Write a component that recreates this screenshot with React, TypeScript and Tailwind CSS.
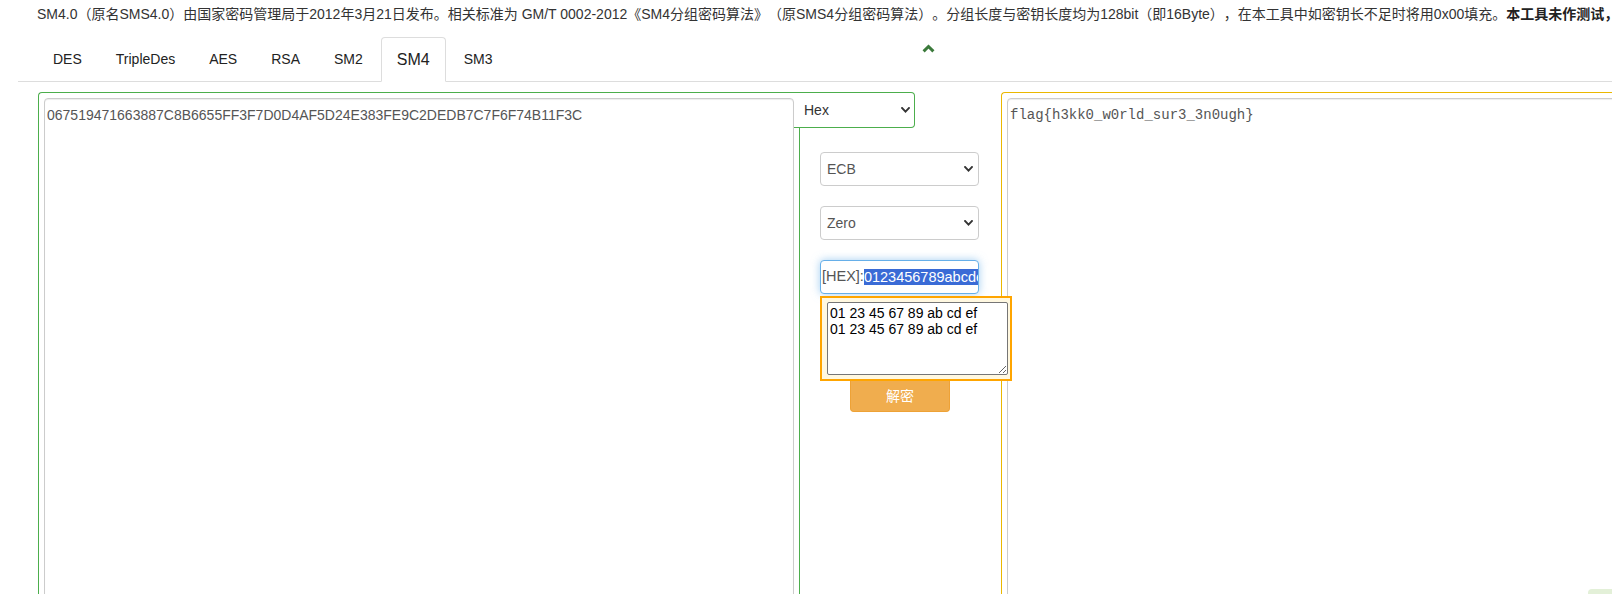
import React from "react";

function Caret({ className = "" }: { className?: string }) {
  return (
    <svg width="9" height="6" viewBox="0 0 9 6" className={className}>
      <path d="M1 1 L4.5 4.6 L8 1" fill="none" stroke="#333" strokeWidth="1.9" strokeLinecap="square" />
    </svg>
  );
}

function SelectBox({ label }: { label: string }) {
  return (
    <div className="h-[34px] w-[159px] border border-[#ccc] rounded-[4px] flex items-center justify-between pl-[6px] pr-[5px] text-[14px] text-[#555] bg-white">
      <span>{label}</span>
      <Caret />
    </div>
  );
}

const tabs = ["DES", "TripleDes", "AES", "RSA", "SM2", "SM4", "SM3"];

export default function App() {
  return (
    <div className="relative w-[1612px] h-[594px] overflow-hidden bg-white font-['Liberation_Sans','Noto_Sans_CJK_SC',sans-serif]">
      {/* description */}
      <div className="h-[37px] pl-[37px] pt-[4px] leading-[20px] text-[14px] text-[#333] whitespace-nowrap overflow-hidden [text-spacing-trim:space-all]">
        SM4.0（原名SMS4.0）由国家密码管理局于2012年3月21日发布。相关标准为 GM/T 0002-2012《SM4分组密码算法》（原SMS4分组密码算法）。分组长度与密钥长度均为128bit（即16Byte），在本工具中如密钥长不足时将用0x00填充。
        <span className="font-bold text-[#222]">本工具未作测试，</span>
      </div>

      {/* tabs */}
      <div className="ml-[18px] border-b border-[#ddd] flex pl-[19px] h-[45px]">
        {tabs.map((t) => {
          const active = t === "SM4";
          return (
            <div
              key={t}
              className={
                active
                  ? "h-[45px] -mb-px mr-[2px] px-[15px] flex items-center border border-[#ddd] border-b-white rounded-t-[4px] bg-white text-[16px] text-[#222]"
                  : "h-[45px] -mb-px mr-[2px] px-[15px] flex items-center border border-transparent text-[14px] text-[#222]"
              }
            >
              {t}
            </div>
          );
        })}
      </div>

      {/* collapse chevron */}
      <svg width="13" height="9" viewBox="0 0 13 9" className="absolute left-[922px] top-[44px]">
        <path d="M1.6 7.4 L6.5 2.5 L11.4 7.4" fill="none" stroke="#3b7a3b" strokeWidth="3" />
      </svg>

      {/* panels */}
      <div className="flex items-start pl-[38px] mt-[10px]">
        {/* left */}
        <div className="w-[756px] shrink-0 border-l border-t border-[#4cae4c] rounded-tl-[4px] pl-[5px] pt-[5px]">
          <textarea
            readOnly
            value="067519471663887C8B6655FF3F7D0D4AF5D24E383FE9C2DEDB7C7F6F74B11F3C"
            className="block w-[750px] h-[520px] border border-[#ccc] rounded-[4px] px-[2px] py-[6px] text-[14px] leading-[20px] text-[#555] shadow-[inset_0_1px_1px_rgba(0,0,0,0.075)] resize-none outline-none"
          />
        </div>

        {/* middle */}
        <div className="w-[207px] shrink-0">
          <div className="w-[121px] h-[36px] border-t border-r border-b border-[#4cae4c] rounded-r-[4px] flex items-center justify-between pl-[10px] pr-[4px] text-[14px] text-[#333] bg-white">
            <span>Hex</span>
            <Caret />
          </div>
          <div className="ml-[5px] border-l border-[#4cae4c] pl-[20px] pt-[24px] h-[500px]">
            <SelectBox label="ECB" />
            <div className="mt-[20px]">
              <SelectBox label="Zero" />
            </div>
            <div className="mt-[20px] h-[34px] w-[159px] border border-[#66afe9] rounded-[4px] shadow-[0_0_8px_rgba(102,175,233,0.6)] flex items-center pl-[1px] overflow-hidden whitespace-nowrap text-[14.5px] bg-white">
              <span className="text-[#555]">[HEX]:</span>
              <span className="bg-[#3a6bd6] text-white leading-[16px]">0123456789abcdef</span>
            </div>
            <div className="relative z-10 mt-[2px] w-[192px] h-[85px] border-2 border-[#ffa500] bg-[#fff8e1] pl-[5px] pt-[4px]">
              <textarea
                readOnly
                value={"01 23 45 67 89 ab cd ef\n01 23 45 67 89 ab cd ef"}
                className="block w-[181px] h-[73px] border border-[#767676] rounded-[2px] p-[2px] text-[14px] leading-[16px] text-black bg-white outline-none"
              />
            </div>
            <button className="ml-[30px] w-[100px] h-[31px] bg-[#f0ad4e] border border-[#eea236] border-t-0 rounded-b-[4px] text-white text-[14px] leading-[20px]">
              解密
            </button>
          </div>
        </div>

        {/* right */}
        <div className="w-[700px] shrink-0 border-l border-t border-[#ebb800] rounded-tl-[4px] pl-[5px] pt-[5px]">
          <textarea
            readOnly
            value="flag{h3kk0_w0rld_sur3_3n0ugh}"
            className="block w-[690px] h-[520px] border border-[#ccc] rounded-[4px] px-[2px] py-[6px] font-['Liberation_Mono',monospace] text-[14px] leading-[20px] text-[#555] shadow-[inset_0_1px_1px_rgba(0,0,0,0.075)] resize-none outline-none"
          />
        </div>
      </div>

      <div className="absolute right-0 bottom-0 w-[24px] h-[5px] bg-[#e3f0d8] rounded-tl-[4px]" />
    </div>
  );
}
